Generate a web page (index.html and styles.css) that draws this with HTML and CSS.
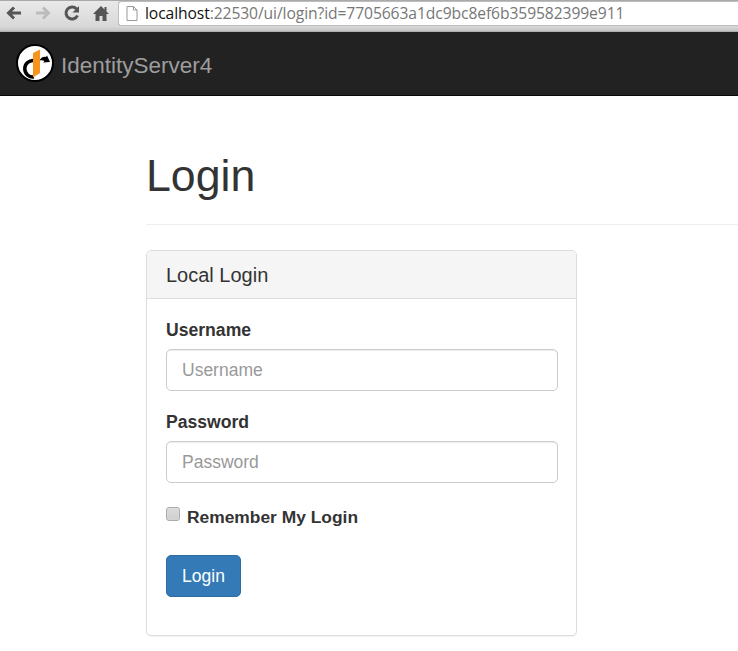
FILE: index.html
```html
<!DOCTYPE html>
<html lang="en">
<head>
<meta charset="utf-8">
<title>Login</title>
<link rel="stylesheet" href="styles.css">
</head>
<body>
<div class="toolbar">
  <div class="nav-icons">
    <svg class="tb-icon" viewBox="0 0 18 18"><path d="M16 9H4M9 3.500 3.500 9 9 14.500" fill="none" stroke="#555" stroke-width="3"/></svg>
    <svg class="tb-icon" viewBox="0 0 18 18"><path d="M2 9h12M9 3.500 14.500 9 9 14.500" fill="none" stroke="#bbb" stroke-width="3"/></svg>
    <svg class="tb-icon" viewBox="0 0 18 18"><path d="M14.500 11.500A6 6 0 1 1 13.500 5" fill="none" stroke="#555" stroke-width="3"/><path d="M16 2v6.500H9.500z" fill="#555"/></svg>
    <svg class="tb-icon" viewBox="0 0 18 18"><path d="M9 2 1 10h2.500v7h4v-5h3v5h4v-7H17l-2.500-2.500V3h-2v2.500z" fill="#555"/></svg>
  </div>
  <div class="omnibox">
    <svg class="page-icon" viewBox="0 0 12 15"><path d="M1 .5h6.500L11 4v10.500H1zM7.500.5V4H11" fill="#fff" stroke="#999"/></svg>
    <span class="url"><span class="host">localhost</span>:22530/ui/login?id=7705663a1dc9bc8ef6b359582399e911</span>
  </div>
</div>
<nav class="navbar">
  <svg class="logo" viewBox="0 0 38 38">
    <circle cx="19" cy="19" r="18" fill="#fff" stroke="#000" stroke-width="2"/>
    <path d="M18 16.500A8.300 8.300 0 1 0 18 33" fill="none" stroke="#000" stroke-width="3.500"/>
    <path d="M17 9 24 5.500V29l-7 4.500z" fill="#f7941d"/>
    <path d="M24 15.500c2-2.500 4-3 6-2.500l1-1.500 3 6.500-7 .5 1.500-1.500c-1.500-.8-3-.8-4.500-.5z" fill="#000"/>
  </svg>
  <span class="brand">IdentityServer4</span>
</nav>
<main class="content">
  <h1 class="page-title">Login</h1>
  <section class="panel">
    <h2 class="panel-heading">Local Login</h2>
    <form class="panel-body">
      <div class="field">
        <label class="field-label" for="username">Username</label>
        <input class="input" id="username" type="text" placeholder="Username">
      </div>
      <div class="field">
        <label class="field-label" for="password">Password</label>
        <input class="input" id="password" type="password" placeholder="Password">
      </div>
      <label class="remember"><span class="checkbox"></span>Remember My Login</label>
      <button class="btn" type="button">Login</button>
    </form>
  </section>
</main>
</body>
</html>
```

FILE: styles.css
```css
* { box-sizing: border-box; }
html, body { margin: 0; padding: 0; height: 100%; overflow: hidden; }
body { background: #fff; color: #333; font-family: "Liberation Sans", Arial, sans-serif; }

.toolbar {
  height: 32px;
  display: flex;
  align-items: flex-start;
  background: linear-gradient(#e9e9e9, #d8d8d8 85%, #c4c4c4);
  border-top: 1px solid #aaa;
  border-bottom: 1px solid #b0b0b0;
}
.nav-icons { display: flex; width: 118px; gap: 11px; padding: 3px 0 0 5px; }
.tb-icon { width: 18px; height: 18px; flex: none; }
.omnibox {
  flex: 1;
  height: 25px;
  display: flex;
  align-items: center;
  gap: 7px;
  padding-left: 7px;
  background: #fff;
  border: 1px solid #bdbdbd;
  border-right: 0;
  border-radius: 3px 0 0 3px;
}
.page-icon { width: 12px; height: 15px; flex: none; }
.url { font-family: "Open Sans", "Noto Sans", sans-serif; font-size: 15.670px; line-height: 20px; margin-top: -2px; color: #777; white-space: nowrap; letter-spacing: -0.1px; }
.host { color: #111; }

.navbar {
  height: 64px;
  display: flex;
  align-items: center;
  gap: 7px;
  padding-left: 16px;
  background: #222;
  border-bottom: 1px solid #080808;
}
.logo { width: 38px; height: 38px; flex: none; margin-top: -2px; }
.brand { font-size: 22.500px; color: #9d9d9d; margin-top: 4px; }

.content { padding-left: 146px; }
.page-title {
  margin: 0;
  padding: 50px 0 20px;
  height: 129px;
  font-size: 44.700px;
  line-height: 59px;
  font-weight: 400;
  color: #333;
  border-bottom: 1px solid #eee;
}
.panel {
  width: 431px;
  height: 386px;
  margin-top: 25px;
  background: #fff;
  border: 1px solid #ddd;
  border-radius: 5px;
  box-shadow: 0 1px 1px rgba(0,0,0,.05);
}
.panel-heading {
  margin: 0;
  height: 48px;
  padding: 0 19px;
  font-size: 20px;
  line-height: 48px;
  font-weight: 400;
  background: #f5f5f5;
  border-bottom: 1px solid #ddd;
  border-radius: 4px 4px 0 0;
}
.panel-body { padding: 21px 18px 0 19px; }
.field { margin-bottom: 21px; }
.field-label { display: block; font-size: 17.600px; font-weight: 700; line-height: 20px; margin-bottom: 9px; }
.input {
  display: block;
  width: 100%;
  height: 42px;
  padding: 0 15px;
  font: 400 17.500px "Liberation Sans", Arial, sans-serif;
  color: #555;
  background: #fff;
  border: 1px solid #ccc;
  border-radius: 5px;
  box-shadow: inset 0 1px 1px rgba(0,0,0,.075);
}
.input::placeholder { color: #999; opacity: 1; }
.remember { display: flex; align-items: center; gap: 7px; height: 26px; font-size: 17.400px; font-weight: 700; }
.checkbox {
  width: 14px;
  height: 14px;
  margin-top: -6px;
  background: linear-gradient(#dcdcdc, #cfcfcf);
  border: 1px solid #aaa;
  border-radius: 3px;
  box-shadow: inset 0 0 1px #fff;
}
.btn {
  display: block;
  width: 75px;
  height: 42px;
  margin-top: 25px;
  padding: 0;
  font: 400 17.500px "Liberation Sans", Arial, sans-serif;
  color: #fff;
  background: #337ab7;
  border: 1px solid #2e6da4;
  border-radius: 5px;
}
```
